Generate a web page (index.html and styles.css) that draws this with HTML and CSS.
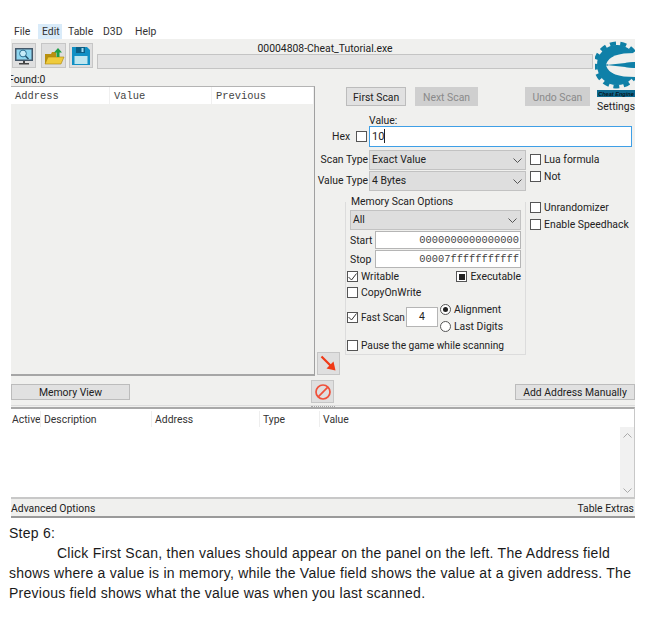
FILE: index.html
```html
<!DOCTYPE html>
<html lang="en">
<head>
<meta charset="utf-8">
<title>Cheat Tutorial Step 6</title>
<link rel="stylesheet" href="styles.css">
</head>
<body>
<div class="app">
  <nav class="menu">
    <span class="mi m-file">File</span><span class="mi m-edit">Edit</span><span class="mi m-table">Table</span><span class="mi m-d3d">D3D</span><span class="mi m-help">Help</span>
  </nav>
  <div class="window">
    <div class="logo">
      <svg width="40" height="58" viewBox="0 0 40 58">
        <circle cx="22" cy="25" r="21.500" fill="none" stroke="#0f7fa5" stroke-width="4" stroke-dasharray="6 4.400"/>
        <circle cx="22" cy="25" r="14.500" fill="none" stroke="#0f80a8" stroke-width="11"/>
        <path d="M11 24.500 C14 16 23 13 40 13 L40 22 Z" fill="#f0f0ee"/>
        <path d="M11 25.500 C14 34 23 37 40 37 L40 28 Z" fill="#f0f0ee"/>
        <path d="M11 25 L40 22 L40 28 Z" fill="#0f80a8"/>
        <rect x="2" y="50" width="38" height="7" fill="#0d6a90"/>
        <text class="logo-text" x="21" y="55.500" text-anchor="middle">Cheat Engine</text>
      </svg>
    </div>
    <div class="toolbar">
      <button class="tool t-pc" aria-label="Open process">
        <svg width="20" height="20" viewBox="0 0 20 20"><rect x="1" y="2" width="18" height="13" fill="#44586a"/><rect x="2.500" y="3.500" width="15" height="10" fill="#8fd6ef"/><circle cx="9" cy="7.500" r="3.400" fill="#c6ecf9" stroke="#2b6f92"/><path d="M11.500 10l3 3" stroke="#24506b" stroke-width="1.500"/><rect x="9" y="15" width="2" height="2" fill="#444"/><rect x="5" y="17" width="10" height="1.500" fill="#444"/></svg>
      </button>
      <button class="tool t-open" aria-label="Open table">
        <svg width="22" height="20" viewBox="0 0 22 20"><path d="M2 8h6l1-2h4v12H2z" fill="#b8900f"/><path d="M2 18l3-7h16l-3 7z" fill="#efcb3c" stroke="#a9840e" stroke-width=".6"/><path d="M15 2l4 4.500h-2.500V11h-3V6.500H11z" fill="#1f9e46"/></svg>
      </button>
      <button class="tool t-save" aria-label="Save table">
        <svg width="20" height="20" viewBox="0 0 20 20"><path d="M1 1h15l3 3v15H1z" fill="#1190c4"/><rect x="5" y="1" width="9" height="6" fill="#0c5f86"/><rect x="10.500" y="2" width="2" height="4" fill="#9ddcf2"/><rect x="3.500" y="10" width="13" height="8" fill="#bfe6ef"/></svg>
      </button>
      <div class="progress-wrap">
        <div class="proc-title">00004808-Cheat_Tutorial.exe</div>
        <div class="progress"></div>
      </div>
    </div>
    <div class="upper">
      <div class="left-col">
        <div class="found">Found:0</div>
        <div class="results">
          <div class="res-head"><span class="rh rh1">Address</span><span class="rh rh2">Value</span><span class="rh rh3">Previous</span></div>
        </div>
      </div>
      <div class="right-col">
        <div class="scan-btns">
          <button class="btn b-first">First Scan</button>
          <button class="btn dis b-next">Next Scan</button>
          <button class="btn dis b-undo">Undo Scan</button>
          <span class="settings">Settings</span>
        </div>
        <div class="value-label">Value:</div>
        <div class="row r-hex">
          <span class="lbl">Hex</span><i class="chk c-hex"></i>
          <div class="value-input">10<b class="caret"></b></div>
        </div>
        <div class="row r-type">
          <span class="rlbl">Scan Type</span>
          <div class="sel s-type">Exact Value<svg class="chev" width="9" height="5" viewBox="0 0 9 5"><path d="M.5.500l4 4 4-4" fill="none" stroke="#555"/></svg></div>
          <label class="opt"><i class="chk"></i>Lua formula</label>
        </div>
        <div class="row r-type r-vt">
          <span class="rlbl">Value Type</span>
          <div class="sel s-type">4 Bytes<svg class="chev" width="9" height="5" viewBox="0 0 9 5"><path d="M.5.500l4 4 4-4" fill="none" stroke="#555"/></svg></div>
          <label class="opt o-not"><i class="chk"></i>Not</label>
        </div>
        <div class="lower">
          <fieldset class="group">
            <legend>Memory Scan Options</legend>
            <div class="sel s-all">All<svg class="chev" width="9" height="5" viewBox="0 0 9 5"><path d="M.5.500l4 4 4-4" fill="none" stroke="#555"/></svg></div>
            <div class="addr"><span>Start</span><div class="addr-in">0000000000000000</div></div>
            <div class="addr a2"><span>Stop</span><div class="addr-in">00007fffffffffff</div></div>
            <div class="flags">
              <label class="opt"><i class="chk on"><svg width="9" height="8" viewBox="0 0 9 8"><path d="M.5 4l3 3 5-6.500" fill="none" stroke="#333"/></svg></i>Writable</label>
              <label class="opt"><i class="chk mid"></i>Executable</label>
            </div>
            <label class="opt o-cow"><i class="chk"></i>CopyOnWrite</label>
            <div class="fast">
              <label class="opt o-fast"><i class="chk on"><svg width="9" height="8" viewBox="0 0 9 8"><path d="M.5 4l3 3 5-6.500" fill="none" stroke="#333"/></svg></i>Fast Scan</label>
              <div class="spin">4</div>
              <div class="radios">
                <label class="opt"><i class="rad on"></i>Alignment</label>
                <label class="opt"><i class="rad"></i>Last Digits</label>
              </div>
            </div>
            <label class="opt o-pause"><i class="chk"></i>Pause the game while scanning</label>
          </fieldset>
          <div class="side-opts">
            <label class="opt"><i class="chk"></i>Unrandomizer</label>
            <label class="opt"><i class="chk"></i>Enable Speedhack</label>
          </div>
        </div>
      </div>
      <button class="tool t-arrow" aria-label="Add selected addresses">
        <svg width="18" height="18" viewBox="0 0 18 18"><path d="M1.500 1.500L11 11" stroke="#f03a17" stroke-width="2.200"/><path d="M15.500 15.500L6.500 13.500L13.500 6.500Z" fill="#f03a17"/></svg>
      </button>
    </div>
    <div class="actions">
      <button class="btn b-mem">Memory View</button>
      <button class="tool t-stop" aria-label="Clear list">
        <svg width="18" height="18" viewBox="0 0 18 18"><circle cx="9" cy="9" r="7" fill="none" stroke="#f0503a" stroke-width="1.700"/><path d="M4.200 13.800L13.800 4.200" stroke="#f0503a" stroke-width="1.700"/></svg>
      </button>
      <button class="btn b-add">Add Address Manually</button>
    </div>
    <div class="splitter"><div class="grip"></div></div>
    <div class="table">
      <div class="tbl-head"><span class="th h1">Active</span><span class="th h2">Description</span><span class="th h3">Address</span><span class="th h4">Type</span><span class="th h5">Value</span></div>
      <div class="tbl-body">
        <div class="scroll">
          <svg width="9" height="5" viewBox="0 0 9 5"><path d="M.5 4.500l4-4 4 4" fill="none" stroke="#aaa"/></svg>
          <svg width="9" height="5" viewBox="0 0 9 5"><path d="M.5.500l4 4 4-4" fill="none" stroke="#aaa"/></svg>
        </div>
      </div>
    </div>
    <div class="footer"><span>Advanced Options</span><span>Table Extras</span></div>
  </div>
</div>
<div class="tutorial">
  <p class="step">Step 6:</p>
  <p class="body-text">Click First Scan, then values should appear on the panel on the left. The Address field shows where a value is in memory, while the Value field shows the value at a given address. The Previous field shows what the value was when you last scanned.</p>
</div>
</body>
</html>
```
FILE: styles.css
```css
* { box-sizing: border-box; }
html, body { margin: 0; padding: 0; background: #fff; }
body { width: 655px; height: 617px; overflow: hidden; font-family: "Liberation Sans", Arial, sans-serif; }
.app { margin: 24px 0 0 11px; width: 624px; font-family: Roboto, "Noto Sans", sans-serif; font-size: 10.400px; color: #222; }
.menu { display: flex; height: 15px; line-height: 16px; font-size: 10.400px; color: #333; position: relative; }
.mi { display: block; }
.m-file { margin-left: 3px; width: 23px; }
.m-edit { margin-left: 1px; width: 24px; padding-left: 4px; background: #d9ebf9; }
.m-table { margin-left: 6px; width: 35px; }
.m-d3d { width: 32px; }
.m-help { width: 30px; }

.window { position: relative; background: #f0f0ee; height: 479px; border-bottom: 2px solid #9a9a9a; }

.logo { position: absolute; left: 584px; top: 1px; width: 40px; height: 58px; }
.logo svg { display: block; }
.logo-text { font-family: "Liberation Sans", sans-serif; font-size: 5.600px; font-weight: 700; font-style: italic; fill: #04161f; }

.tool { display: flex; align-items: center; justify-content: center; padding: 0; background: #dfdfdf; border: 1px solid #c6c6c6; }

.toolbar { display: flex; height: 32px; padding: 4px 0 0 1px; }
.t-pc { width: 24px; height: 25px; }
.t-open { width: 25px; height: 25px; margin-left: 5px; }
.t-save { width: 24px; height: 25px; margin-left: 3px; }
.progress-wrap { margin-left: 4px; width: 496px; display: flex; flex-direction: column; }
.proc-title { height: 11px; line-height: 11px; text-align: center; color: #222; padding-right: 40px; }
.progress { height: 15px; background: #e4e4e4; border: 1px solid #c4c4c4; }

.upper { position: relative; display: flex; height: 305px; }
.left-col { width: 305px; flex: none; }
.found { height: 15px; line-height: 18px; margin-left: -3px; overflow: hidden; clip-path: inset(0 0 0 3px); color: #222; }
.results { width: 304px; height: 290px; background: #f0f0ee; border: 1px solid #a0a0a0; border-left: 0; border-top: 1px solid #b4b4b4; border-bottom: 2px solid #a6a6a6; }
.res-head { display: flex; height: 17px; background: #fff; line-height: 19px; font-family: "Liberation Mono", monospace; font-size: 10.400px; color: #444; }
.rh { display: block; padding-left: 4px; border-right: 1px solid #f0f0f0; height: 17px; }
.rh1 { width: 99px; }
.rh2 { width: 102px; }
.rh3 { flex: 1; }

.right-col { flex: 1; min-width: 0; padding-top: 16px; }
.btn { display: block; padding: 1px 0 0; font: inherit; color: #222; background: #e1e1e1; border: 1px solid #bcbcbc; }
.btn.dis { background: #cfcfcf; border-color: #cfcfcf; color: #8a8a8a; }
.scan-btns { display: flex; height: 19px; padding-left: 30px; position: relative; }
.b-first { width: 61px; }
.b-next { width: 63px; margin-left: 9px; }
.b-undo { width: 66px; margin-left: 47px; }
.settings { margin-left: 7px; line-height: 40px; height: 19px; color: #222; white-space: nowrap; }

.value-label { height: 16px; margin: 6px 0 -2px 53px; line-height: 18px; }
.row { display: flex; align-items: center; }
.r-hex { height: 21px; }
.lbl { margin-left: 16px; width: 24px; }
.chk { display: inline-flex; align-items: center; justify-content: center; flex: none; width: 11px; height: 11px; background: #fff; border: 1px solid #555; margin-right: 3px; }
.c-hex { margin-right: 2px; }
.value-input { width: 263px; height: 21px; background: #fff; border: 1px solid #3f9fe6; padding-left: 2px; line-height: 19px; font-size: 11px; }
.caret { display: inline-block; width: 1px; height: 14px; background: #222; vertical-align: -3px; }

.r-type { height: 21px; margin-top: 2px; }
.r-vt { margin-top: 0; }
.rlbl { width: 52px; text-align: right; margin-right: 1px; white-space: nowrap; }
.sel { position: relative; height: 20px; line-height: 18px; padding-left: 2px; background: #dedede; border: 1px solid #c2c2c2; }
.chev { position: absolute; right: 3px; top: 7px; }
.s-type { width: 157px; }
.opt { display: flex; align-items: center; white-space: nowrap; color: #222; }
.r-type .opt { margin-left: 4px; }
.o-not { margin-top: -8px; }

.lower { display: flex; margin-top: 4px; margin-left: 29px; }
.group { width: 181px; height: 160px; margin: 0; padding: 0 4px; border: 1px solid #dcdcdc; border-top: 0; position: relative; display: block; min-width: 0; }
.group legend { padding: 0; height: 13px; line-height: 13px; color: #222; margin-left: 1px; }
.s-all { width: 171px; margin-top: 2px; }
.addr { display: flex; align-items: center; height: 18px; margin-top: 1px; }
.addr span { width: 25px; }
.addr-in { width: 146px; height: 18px; background: #fff; border: 1px solid #b5b5b5; text-align: right; padding-right: 1px; line-height: 16px; font-family: "Liberation Mono", monospace; font-size: 10.400px; color: #444; white-space: nowrap; overflow: hidden; }
.flags { display: flex; justify-content: space-between; margin: 1px 0 0 -3px; height: 15px; width: 174px; }
.o-cow { margin: 1px 0 0 -3px; height: 15px; }
.fast { display: flex; align-items: center; height: 34px; margin-left: -3px; }
.o-fast { width: 59px; font-size: 10px; }
.spin { width: 32px; height: 20px; background: #fff; border: 1px solid #b5b5b5; text-align: center; line-height: 18px; }
.radios { display: flex; flex-direction: column; gap: 5px; margin: 1px 0 0 2px; }
.radios .opt { height: 12px; }
.rad { position: relative; display: block; width: 11px; height: 11px; margin-right: 3px; flex: none; background: #fff; border: 1px solid #555; border-radius: 50%; }
.rad.on::after { content: ""; position: absolute; left: 2px; top: 2px; width: 5px; height: 5px; border-radius: 50%; background: #222; }
.mid::after { content: ""; width: 6px; height: 6px; background: #222; }
.o-pause { margin: 4px 0 0 -3px; height: 15px; font-size: 10.200px; }
.side-opts { display: flex; flex-direction: column; gap: 3.500px; margin: 6px 0 0 4px; }
.side-opts .opt { height: 13px; }

.t-arrow { position: absolute; left: 306px; top: 281px; width: 23px; height: 23px; }

.actions { display: flex; height: 29px; padding-top: 8px; position: relative; }
.b-mem { width: 119px; height: 16px; line-height: 13px; }
.t-stop { width: 23px; height: 23px; margin: -4px 0 0 181px; }
.b-add { width: 120px; height: 16px; line-height: 13px; margin-left: 181px; }

.splitter { height: 2px; border-top: 1px solid #dcdcdc; }
.grip { width: 24px; margin-left: 300px; border-top: 1px dotted #a8a8a8; }
.table { height: 90px; background: #fff; border-top: 2px solid #a8a8a8; border-right: 1px solid #c8c8c8; }
.tbl-head { display: flex; height: 18px; color: #333; padding-top: 2px; }
.th { display: block; padding: 1px 0 0 1px; border-right: 1px solid #eee; white-space: nowrap; overflow: hidden; height: 16px; line-height: 15px; }
.h1 { width: 30px; }
.h2 { width: 111px; padding-left: 3px; }
.h3 { width: 108px; padding-left: 3px; }
.h4 { width: 60px; padding-left: 3px; }
.h5 { flex: 1; padding-left: 3px; border-right: 0; }
.tbl-body { display: flex; justify-content: flex-end; height: 70px; }
.scroll { width: 14px; height: 70px; background: #f1f1f1; display: flex; flex-direction: column; justify-content: space-between; align-items: center; padding: 6px 0 4px; }
.scroll svg { display: block; }

.footer { display: flex; justify-content: space-between; height: 19px; line-height: 19px; border-top: 2px solid #c8c8c8; background: #f0f0ee; padding-right: 1px; }

.tutorial { margin: 5px 0 0 9px; width: 636px; font-family: "Liberation Sans", Arial, sans-serif; font-size: 14px; letter-spacing: .25px; line-height: 20px; color: #1a1a1a; }
.tutorial p { margin: 0; }
.body-text { text-indent: 48px; }
```
